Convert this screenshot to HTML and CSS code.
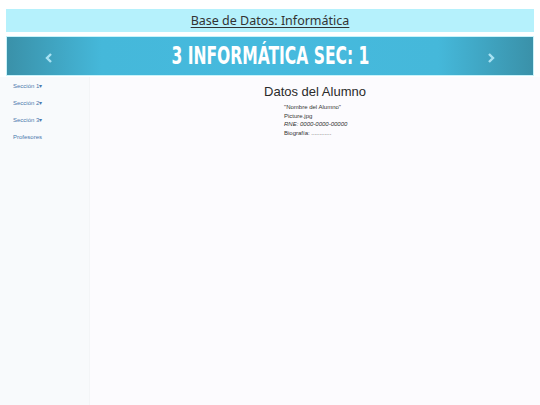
FILE: index.html
```html
<!DOCTYPE html>
<html lang="es">
<head>
<meta charset="utf-8">
<title>Base de Datos: Informática</title>
<link rel="stylesheet" href="styles.css">
</head>
<body>
<header class="top">
  <a class="top-title" href="#">Base de Datos: Informática</a>
</header>
<div class="banner">
  <span class="arrow">
    <svg width="8" height="10" viewBox="0 0 8 10"><path d="M6 1 L2 5 L6 9" fill="none" stroke="#a9e2f3" stroke-width="2.4"/></svg>
  </span>
  <h1 class="banner-title">3 INFORMÁTICA SEC: 1</h1>
  <span class="arrow">
    <svg width="8" height="10" viewBox="0 0 8 10"><path d="M2 1 L6 5 L2 9" fill="none" stroke="#a9e2f3" stroke-width="2.4"/></svg>
  </span>
</div>
<div class="layout">
  <nav class="side">
    <a href="#">Sección 1▾</a>
    <a href="#">Sección 2▾</a>
    <a href="#">Sección 3▾</a>
    <a href="#">Profesores</a>
  </nav>
  <main class="main">
    <h2 class="main-title">Datos del Alumno</h2>
    <ul class="data">
      <li>"Nombre del Alumno"</li>
      <li>Picture.jpg</li>
      <li class="it">RNE: 0000-0000-00000</li>
      <li>Biografía: ............</li>
    </ul>
  </main>
</div>
</body>
</html>
```

FILE: styles.css
```css
html, body {
  margin: 0;
  padding: 0;
  height: 100%;
}
body {
  background: #ffffff;
  font-family: "Liberation Sans", Arial, sans-serif;
  display: flex;
  flex-direction: column;
}
.top {
  margin: 9px 6px 0;
  height: 23px;
  background: #b5f1fc;
  display: flex;
  align-items: center;
  justify-content: center;
}
.top-title {
  font-family: "Noto Sans", sans-serif;
  font-size: 12.5px;
  color: #333;
  text-decoration: underline;
  text-decoration-thickness: 1px;
  text-underline-offset: 2px;
}
.banner {
  margin: 4px 6px 0;
  height: 38px;
  border: 1px solid #c8f3fb;
  background: linear-gradient(to right, #3a91a9 0%, #45b8da 18%, #46bade 50%, #45b8da 82%, #3a91a9 100%);
  display: flex;
  align-items: center;
  justify-content: space-between;
  padding: 0 38px;
}
.arrow {
  display: flex;
  align-items: center;
  padding-top: 3px;
}
.banner-title {
  margin: 0;
  font-family: "DejaVu Sans", sans-serif;
  font-stretch: condensed;
  font-weight: bold;
  font-size: 24px;
  color: #ffffff;
  transform: scaleX(0.72);
}
.layout {
  flex: 1;
  display: flex;
  margin-top: 1px;
}
.side {
  width: 90px;
  background: #f8fafc;
  border-right: 1px solid #f3f5f7;
  display: flex;
  flex-direction: column;
  gap: 10px;
  padding: 6px 0 0 13px;
  box-sizing: border-box;
}
.side a {
  font-size: 6px;
  color: #4a78ad;
  text-decoration: none;
  line-height: 7px;
}
.main {
  flex: 1;
  background: #fcfbfe;
  padding-top: 7px;
}
.main-title {
  margin: 0;
  text-align: center;
  font-weight: normal;
  font-size: 13px;
  color: #2a2a2a;
  line-height: 16px;
}
.data {
  list-style: none;
  margin: 3px 0 0;
  padding-left: 194px;
  font-size: 6px;
  line-height: 8.7px;
  color: #333;
}
.data .it {
  font-style: italic;
}
```
